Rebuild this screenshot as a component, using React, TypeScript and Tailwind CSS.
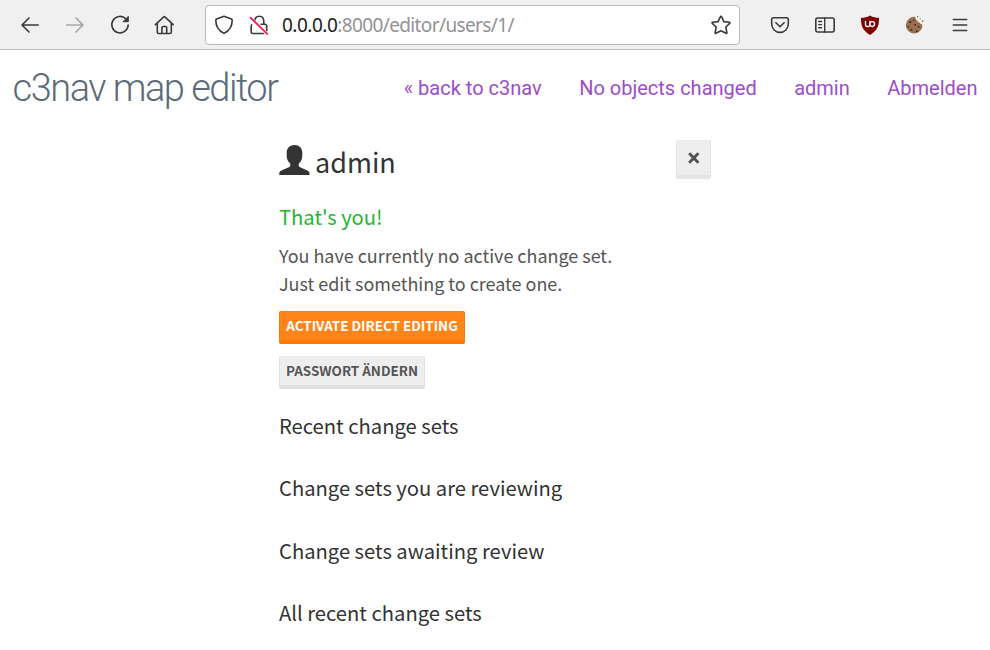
import type { ReactNode } from "react";

const sans = "font-['Noto_Sans_CJK_SC','Noto_Sans',sans-serif]";

function Icon({ children, label }: { children: ReactNode; label: string }) {
  return (
    <svg aria-label={label} width="20" height="20" viewBox="0 0 20 20" fill="none" stroke="#3a3a3d" strokeWidth="1.6" strokeLinecap="round" strokeLinejoin="round" className="shrink-0 overflow-visible">
      {children}
    </svg>
  );
}

function BrowserBar() {
  return (
    <div className="flex h-[50px] shrink-0 items-center border-b border-[#b9b9ba] bg-[#f0f0f1]">
      <div className="flex items-center gap-[25px] pl-5 pt-px">
        <Icon label="Back"><path d="M18.2 10H2M9 3L2 10l7 7" /></Icon>
        <Icon label="Forward"><g stroke="#a6a6a8"><path d="M1.8 10H18M11 3l7 7-7 7" /></g></Icon>
        <Icon label="Reload">
          <path d="M16 4A8.2 8.2 0 1 0 18.2 10" />
          <path d="M18.3 1.7v5h-5z" fill="#3a3a3d" strokeWidth="1" />
        </Icon>
        <Icon label="Home">
          <path d="M.4 9.7L8.700 1.8q.6-.5 1.2 0L18.200 9.7M2.300 8.2v9q0 1.3 1.3 1.3h11.400q1.3 0 1.3-1.3v-9M6.900 18.3v-5.6q0-1.2 1.2-1.2h2.400q1.2 0 1.2 1.2v5.600" />
        </Icon>
      </div>
      <div className="ml-[30px] flex h-10 w-[535px] items-center rounded-[4px] border border-[#b9b9ba] bg-white pl-2 pr-2">
        <Icon label="Tracking protection">
          <path d="M10 1.2L17.4 4q.8.3.8 1.2c0 5.6-2.5 10.3-8.2 13.2C4.300 15.500 1.800 10.800 1.800 5.200q0-.9.8-1.200z" />
        </Icon>
        <div className="w-[15px]" />
        <Icon label="Connection not secure">
          <path d="M5.800 6.500q0-5.200 4.500-5.200 4.500 0 4.500 5.200v2.700M12 9.300h4q1.700 0 1.700 1.700v5M2.700 9.800q-.5.500-.5 1.200v5.800q0 1.700 1.700 1.700h11" />
          <path d="M1.800 3.200l16 15.500" stroke="#fff" strokeWidth="3" />
          <path d="M1.500 2.600L18.200 18.800" stroke="#ff1947" strokeWidth="1.800" />
        </Icon>
        <span className="ml-[13px] grow whitespace-pre font-['Noto_Sans','Open_Sans',sans-serif] text-[19px] leading-6 text-[#929296]">
          <span className="tracking-[-0.5px] text-[#1c1b22]">0.0.0.0</span>
          <span className="tracking-[-0.62px]">:8000/editor/users/1/</span>
        </span>
        <Icon label="Bookmark">
          <path d="M10 1.300q.5 0 .7.500l2.200 4.800 5.500.7q1 .2.300 1L14.800 12l1.100 5.600q.1 1-.8.700L10 15.700l-5.100 2.600q-.9.300-.8-.7L5.200 12 1.300 8.300q-.7-.8.300-1l5.500-.7 2.200-4.800q.2-.5.7-.5z" />
        </Icon>
      </div>
      <div className="ml-[30px] flex items-center gap-[25px]">
        <Icon label="Pocket">
          <path d="M3.300 2.700h13.400q1.600 0 1.600 1.600v4.800a8.300 8.300 0 0 1-16.600 0v-4.800q0-1.600 1.600-1.600zM5.900 7.700l4.100 4 4.100-4" />
        </Icon>
        <Icon label="Sidebar">
          <rect x="0.800" y="3" width="18.400" height="14" rx="2" />
          <path d="M9.700 3v14M3.700 6.500h2.800M3.700 9.600h2.800M3.700 12.700h2.800" strokeWidth="1.400" />
        </Icon>
        <Icon label="Ad blocker">
          <path d="M10 .4C13 2.300 15.500 2.700 19 2.800c0 8-1.200 12.400-9 17.200C2.200 15.200 1 10.800 1 2.800 4.500 2.700 7 2.300 10 .4z" fill="#800000" stroke="none" />
          <path d="M5.500 6.500v3q0 2 2 2h1q1.300 0 1.300-2v-3" stroke="#fff" strokeWidth="1.300" />
          <circle cx="12.200" cy="9.100" r="2.400" stroke="#fff" strokeWidth="1.300" />
        </Icon>
        <Icon label="Cookies">
          <g stroke="none">
            <path d="M10.500 2Q9.800 4.500 12.300 5.600q.2 2 2.200 2 .8 2 2.900 1.800A8.300 8.300 0 1 1 10.500 2z" fill="#966f4c" />
            <path d="M4.500 6h1.700v1.700H4.500zM8 4.500h1.500v1.300H8zM9.300 9H11v1.500H9.300zM2.700 11h1.400v1.500H2.700zM5.500 14h1.700v1.500H5.500zM13 11h1.500v1.500H13zM11 15.500h1.600V17H11z" fill="#39251a" />
            <path d="M12 1h1.200v1.200H12zM14.800 3.500h.9v.9h-.9zM16.900 5.600h1.300v1.300h-1.300z" fill="#87654b" />
          </g>
        </Icon>
        <Icon label="Menu"><path d="M3.300 4.500h13.400M3.300 10h13.400M3.300 15.500h13.400" /></Icon>
      </div>
    </div>
  );
}

function SiteHeader() {
  return (
    <header className="flex h-[75px] shrink-0 items-center justify-between pl-[12.600px] pr-[12.500px] font-[Roboto,sans-serif]">
      <h1 className="text-[38px] font-[300] leading-[50px] tracking-[-1.5px] text-[#5c6b7a]">c3nav map editor</h1>
      <nav className="flex gap-[37.500px] whitespace-nowrap text-[20px] leading-7 text-[#9b4dca]">
        <a>« back to c3nav</a>
        <a>No objects changed</a>
        <a>admin</a>
        <a>Abmelden</a>
      </nav>
    </header>
  );
}

const sections = ["Recent change sets", "Change sets you are reviewing", "Change sets awaiting review", "All recent change sets"];

export default function App() {
  return (
    <div className={`flex h-[650px] w-[990px] flex-col overflow-hidden bg-white ${sans}`}>
      <BrowserBar />
      <SiteHeader />
      <main className="ml-[279px] mt-[15px] flex w-[432px] flex-col items-start">
        <div className="flex h-[40px] w-full items-start justify-between">
          <h2 className="flex items-start text-[27px] leading-[40px] text-[#333]">
            <svg aria-label="User" width="31" height="31" viewBox="0 0 31 31" className="-ml-[0.500px] mr-[5.500px] mt-[5px]" fill="#333">
              <path d="M15.500 0C20 0 23.300 3 23.300 7.500v3c0 4-1.600 6.500-3.600 8.200v1.500c0 1 .5 1.600 1.500 2l7.600 3.500c1.200.600 1.700 1.300 1.700 2.600V30H.3v-1.700c0-1.300.6-2 1.700-2.600L9.800 22.200c1-.4 1.500-1 1.500-2v-1.500c-2-1.700-3.600-4.200-3.600-8.200v-3C7.700 3 11 0 15.500 0z" />
            </svg>
            <span className="pt-[2px]">admin</span>
          </h2>
          <button aria-label="Close" className="flex h-[39px] w-[35px] items-center justify-center rounded-[2px] border border-b-4 border-[#e4e4e4] border-t-[#ebebeb] bg-[#eee]">
            <svg width="12" height="12" viewBox="0 0 12 12" stroke="#505050" strokeWidth="2.800" fill="none"><path d="M1.200 1.200l9.200 9.600M10.400 1.200l-9.200 9.600" /></svg>
          </button>
        </div>
        <h4 className="mt-[23px] text-[20.200px] leading-[28px] text-[#22b632]">That's you!</h4>
        <p className="mt-[10px] text-[17.960px] leading-[28px] text-[#555]">
          You have currently no active change set.<br />Just edit something to create one.
        </p>
        <button className="mt-[14px] h-[33px] w-[186px] whitespace-nowrap rounded-[2px] border border-b-4 border-[#ff7800] border-t-[#ff7f0e] bg-[#ff851b] pb-[2px] text-[13.450px] font-bold leading-[26px] text-white">ACTIVATE DIRECT EDITING</button>
        <button className="mt-3 h-[33px] w-[146px] whitespace-nowrap rounded-[2px] border border-b-4 border-[#e1e1e1] border-t-[#ebebeb] bg-[#eee] pb-[2px] text-[13.450px] font-bold leading-[26px] text-[#555]">PASSWORT ÄNDERN</button>
        <div className="mt-[23px] flex flex-col gap-[34.300px]">
          {sections.map((title) => (
            <h4 key={title} className="whitespace-nowrap text-[20.200px] leading-[28px] text-[#333]">{title}</h4>
          ))}
        </div>
      </main>
    </div>
  );
}
